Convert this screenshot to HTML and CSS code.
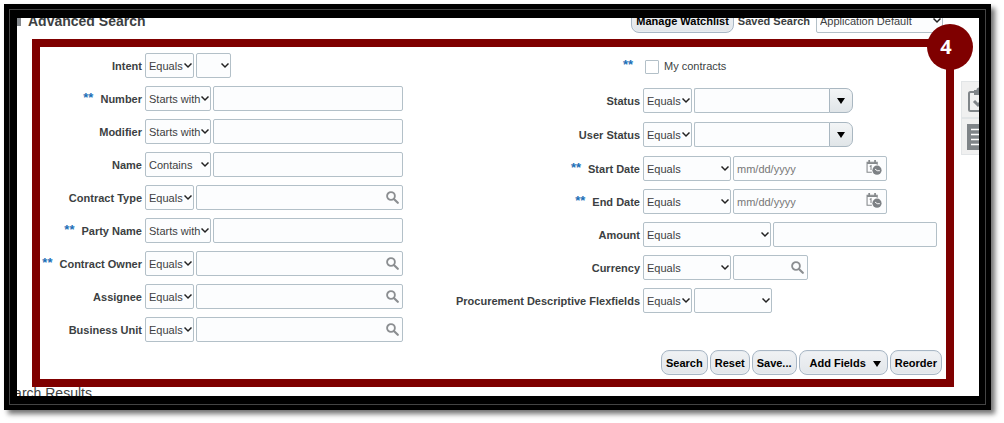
FILE: index.html
```html
<!DOCTYPE html>
<html lang="en">
<head>
    <meta charset="UTF-8">
    <meta name="viewport" content="width=device-width, initial-scale=1.0">
    <title>Advanced Search</title>
    <link rel="stylesheet" href="styles.css">
</head>
<body>
    <svg class="sprite" aria-hidden="true">
        <symbol id="icon-search" viewBox="0 0 12 12">
            <circle cx="4.6" cy="4.6" r="3.6" fill="none" stroke="#8b8e91" stroke-width="1.7"/>
            <path d="M7.3 7.3l3.6 3.6" stroke="#8b8e91" stroke-width="2" stroke-linecap="round"/>
        </symbol>
        <symbol id="icon-date" viewBox="0 0 15 14">
            <path d="M5.5 11.5h-4.500v-9.500h9.500v2.500" fill="none" stroke="#85898c"/>
            <path d="M1 3h9.500M3 0v3M8.500 0v3" stroke="#85898c" stroke-width="1.600"/>
            <path d="M3.500 6l1.200-.7v4" fill="none" stroke="#85898c"/>
            <circle cx="10.300" cy="9.500" r="4.300" fill="#7d8185"/>
            <path d="M8.500 8.500l2 1.500h2.500" fill="none" stroke="#fff" stroke-width=".9"/>
        </symbol>
    </svg>

    <div class="frame">
        <main class="page">
            <!-- Page header -->
            <header class="header">
                <span class="disclosure"></span>
                <h1>Advanced Search</h1>
                <button type="button" class="btn">Manage Watchlist</button>
                <label for="saved-search" class="saved-label">Saved Search</label>
                <select id="saved-search" class="saved-select"><option>Application Default</option></select>
            </header>

            <div class="workspace">
                <!-- Search panel -->
                <form class="panel">
                    <div class="columns">
                        <div class="column">
                            <div class="row">
                                <label for="intent">Intent</label>
                                <div class="controls">
                                    <select class="op" aria-label="Intent operator"><option>Equals</option></select>
                                    <select id="intent" class="tiny"><option></option></select>
                                </div>
                            </div>
                            <div class="row">
                                <label for="number"><span class="req">**</span>Number</label>
                                <div class="controls">
                                    <select class="op-medium" aria-label="Number operator"><option>Starts with</option></select>
                                    <input type="text" id="number">
                                </div>
                            </div>
                            <div class="row">
                                <label for="modifier">Modifier</label>
                                <div class="controls">
                                    <select class="op-medium" aria-label="Modifier operator"><option>Starts with</option></select>
                                    <input type="text" id="modifier">
                                </div>
                            </div>
                            <div class="row">
                                <label for="name">Name</label>
                                <div class="controls">
                                    <select class="op-medium" aria-label="Name operator"><option>Contains</option></select>
                                    <input type="text" id="name">
                                </div>
                            </div>
                            <div class="row">
                                <label for="contract-type">Contract Type</label>
                                <div class="controls">
                                    <select class="op" aria-label="Contract Type operator"><option>Equals</option></select>
                                    <div class="field">
                                        <input type="text" id="contract-type">
                                        <svg class="icon-search"><use href="#icon-search"/></svg>
                                    </div>
                                </div>
                            </div>
                            <div class="row">
                                <label for="party-name"><span class="req">**</span>Party Name</label>
                                <div class="controls">
                                    <select class="op-medium" aria-label="Party Name operator"><option>Starts with</option></select>
                                    <input type="text" id="party-name">
                                </div>
                            </div>
                            <div class="row">
                                <label for="contract-owner"><span class="req">**</span>Contract Owner</label>
                                <div class="controls">
                                    <select class="op" aria-label="Contract Owner operator"><option>Equals</option></select>
                                    <div class="field">
                                        <input type="text" id="contract-owner">
                                        <svg class="icon-search"><use href="#icon-search"/></svg>
                                    </div>
                                </div>
                            </div>
                            <div class="row">
                                <label for="assignee">Assignee</label>
                                <div class="controls">
                                    <select class="op" aria-label="Assignee operator"><option>Equals</option></select>
                                    <div class="field">
                                        <input type="text" id="assignee">
                                        <svg class="icon-search"><use href="#icon-search"/></svg>
                                    </div>
                                </div>
                            </div>
                            <div class="row">
                                <label for="business-unit">Business Unit</label>
                                <div class="controls">
                                    <select class="op" aria-label="Business Unit operator"><option>Equals</option></select>
                                    <div class="field">
                                        <input type="text" id="business-unit">
                                        <svg class="icon-search"><use href="#icon-search"/></svg>
                                    </div>
                                </div>
                            </div>
                        </div>

                        <div class="column column-right">
                            <div class="row row-check">
                                <span class="row-label"><span class="req">**</span></span>
                                <div class="controls">
                                    <input type="checkbox" id="my-contracts">
                                    <label for="my-contracts">My contracts</label>
                                </div>
                            </div>
                            <div class="row row-combo">
                                <label for="status">Status</label>
                                <div class="controls">
                                    <select class="op" aria-label="Status operator"><option>Equals</option></select>
                                    <div class="combo">
                                        <input type="text" id="status">
                                        <button type="button" aria-label="Show statuses"><span class="arrow"></span></button>
                                    </div>
                                </div>
                            </div>
                            <div class="row row-combo">
                                <label for="user-status">User Status</label>
                                <div class="controls">
                                    <select class="op" aria-label="User Status operator"><option>Equals</option></select>
                                    <div class="combo">
                                        <input type="text" id="user-status">
                                        <button type="button" aria-label="Show user statuses"><span class="arrow"></span></button>
                                    </div>
                                </div>
                            </div>
                            <div class="row">
                                <label for="start-date"><span class="req">**</span>Start Date</label>
                                <div class="controls">
                                    <select class="op-wide" aria-label="Start Date operator"><option>Equals</option></select>
                                    <div class="field date">
                                        <input type="text" id="start-date" placeholder="mm/dd/yyyy">
                                        <svg class="icon-date"><use href="#icon-date"/></svg>
                                    </div>
                                </div>
                            </div>
                            <div class="row">
                                <label for="end-date"><span class="req">**</span>End Date</label>
                                <div class="controls">
                                    <select class="op-wide" aria-label="End Date operator"><option>Equals</option></select>
                                    <div class="field date">
                                        <input type="text" id="end-date" placeholder="mm/dd/yyyy">
                                        <svg class="icon-date"><use href="#icon-date"/></svg>
                                    </div>
                                </div>
                            </div>
                            <div class="row">
                                <label for="amount">Amount</label>
                                <div class="controls">
                                    <select class="op-amount" aria-label="Amount operator"><option>Equals</option></select>
                                    <input type="text" id="amount" class="amount">
                                </div>
                            </div>
                            <div class="row">
                                <label for="currency">Currency</label>
                                <div class="controls">
                                    <select class="op-wide" aria-label="Currency operator"><option>Equals</option></select>
                                    <div class="field currency">
                                        <input type="text" id="currency">
                                        <svg class="icon-search"><use href="#icon-search"/></svg>
                                    </div>
                                </div>
                            </div>
                            <div class="row">
                                <label for="flexfields">Procurement Descriptive Flexfields</label>
                                <div class="controls">
                                    <select class="op" aria-label="Flexfields operator"><option>Equals</option></select>
                                    <select id="flexfields" class="flexfields"><option></option></select>
                                </div>
                            </div>
                        </div>
                    </div>

                    <div class="actions">
                        <button type="button" class="btn">Search</button>
                        <button type="button" class="btn">Reset</button>
                        <button type="button" class="btn">Save...</button>
                        <button type="button" class="btn add-fields">Add Fields <span class="arrow"></span></button>
                        <button type="button" class="btn">Reorder</button>
                    </div>

                    <span class="badge">4</span>
                </form>

                <!-- Side tabs -->
                <aside class="tabs">
                    <button type="button" class="tab" aria-label="Tasks">
                        <svg width="24" height="26" viewBox="0 0 24 26">
                            <path d="M7 5H3.500Q2 5 2 6.500V22.500Q2 24 3.500 24H20.500Q22 24 22 22.500V6.500Q22 5 20.500 5H17" fill="none" stroke="#808589" stroke-width="2"/>
                            <path d="M7 3h2.500a2.500 2.500 0 0 1 5 0H17v5H7z" fill="#808589"/>
                            <path d="M7 14l4 4 7-7" fill="none" stroke="#808589" stroke-width="3"/>
                        </svg>
                    </button>
                    <button type="button" class="tab" aria-label="List">
                        <svg width="24" height="26" viewBox="0 0 24 26">
                            <path d="M0 0h24v26H0z" fill="#7f8488"/>
                            <path d="M4 5.500h16M4 10.500h16M4 15.500h16M4 20.500h16" stroke="#fff" stroke-width="1.500"/>
                        </svg>
                    </button>
                </aside>
            </div>

            <h2 class="results">Search Results</h2>
        </main>
    </div>
</body>
</html>
```
FILE: styles.css
```css
* {
    box-sizing: border-box;
}

body {
    margin: 0;
    padding: 4px 13px 13px 4px;
    background: #fff;
    color: #3c3f42;
    font-family: "Liberation Sans", Arial, sans-serif;
    font-size: 11px;
}

button,
input,
select {
    font: inherit;
    color: inherit;
}

.sprite {
    display: none;
}

/* Double black frame */
.frame {
    border: 6px solid #000;
    background: #000;
    box-shadow: 4px 4px 5px rgba(0, 0, 0, 0.55);
}

.page {
    border: solid #000;
    border-width: 8px 6px 8px 7px;
    outline: 1px solid #444;
    background-color: #fff;
    overflow: hidden;
}

/* Header, scrolled partly under the frame */
.header {
    display: flex;
    align-items: center;
    height: 25px;
    margin-top: -10px;
    padding-right: 36px;
}

.header h1 {
    flex: 1;
    margin: 0;
    font-size: 14px;
    line-height: 20px;
}

.disclosure {
    width: 4px;
    height: 10px;
    margin-right: 7px;
    background: #85898e;
}

.saved-label {
    margin: 0 6px 0 4px;
    font-weight: bold;
}

.saved-select {
    width: 127px;
}

/* Panel */
.workspace {
    display: flex;
    margin: 6px 0 0 15px;
}

.panel {
    position: relative;
    flex: 1;
    padding: 6px 4px 4px 0;
    border: 8px solid #7f0000;
}

.columns {
    display: grid;
    grid-template-columns: 2fr 3fr;
}

.column {
    display: flex;
    flex-direction: column;
    gap: 8px;
}

.row {
    display: flex;
    align-items: center;
    gap: 3px;
    height: 25px;
}

.row-check {
    margin-bottom: 2px;
}

.row-combo {
    margin-bottom: 1px;
}

.row > label,
.row-label {
    flex: none;
    width: 102px;
    padding-top: 1px;
    font-weight: bold;
    line-height: 13px;
    text-align: right;
    white-space: nowrap;
}

.column-right .row > label,
.column-right .row-label {
    width: 237px;
}

.req {
    margin-right: 7px;
    color: #1c6fb7;
    font-size: 13px;
    line-height: 0;
    vertical-align: 1px;
}

.controls {
    display: flex;
    align-items: center;
    flex: none;
    gap: 2px;
    width: 258px;
}

.column-right .controls {
    width: auto;
}

select,
input[type="text"] {
    height: 25px;
    margin: 0;
    padding: 1px 3px 0;
    border: 1px solid #b3c0c8;
    border-radius: 2px;
    background-color: #fcfdfe;
}

input[type="text"] {
    flex: 1;
    width: 100%;
    min-width: 0;
}

input::placeholder {
    color: #777;
    opacity: 1;
}

select {
    appearance: none;
    background-image: url("data:image/svg+xml,%3Csvg xmlns='http://www.w3.org/2000/svg' width='8' height='7'%3E%3Cpath d='M.500 1.500L4 5l3.500-3.500' fill='none' stroke='%23222' stroke-width='1.500'/%3E%3C/svg%3E");
    background-repeat: no-repeat;
    background-position: right 1px center;
}

.op {
    width: 49px;
}

.op-medium {
    width: 66px;
}

.op-wide {
    width: 88px;
}

.op-amount {
    width: 128px;
}

.tiny {
    width: 35px;
}

.flexfields {
    width: 78px;
}

.controls .amount {
    flex: none;
    width: 164px;
}

/* Text box with an icon over its right end */
.field {
    position: relative;
    display: flex;
    flex: 1;
}

.field.date {
    flex: none;
    width: 154px;
}

.field.currency {
    flex: none;
    width: 75px;
}

.icon-search {
    position: absolute;
    top: 6px;
    right: 4px;
    width: 13px;
    height: 13px;
}

.icon-date {
    position: absolute;
    top: 4px;
    right: 5px;
    width: 16px;
    height: 15px;
}

.combo {
    display: flex;
    width: 159px;
}

.combo input[type="text"] {
    border-right: 0;
    border-radius: 2px 0 0 2px;
}

.combo button {
    display: flex;
    align-items: center;
    justify-content: center;
    width: 24px;
    padding: 0;
    border: 1px solid #a9b7c1;
    border-radius: 0 7px 7px 0;
    background: linear-gradient(#f3f5f6, #e0e5e8);
}

.arrow {
    display: inline-block;
    border: 4px solid transparent;
    border-top: 6px solid #000;
    border-bottom: 0;
}

input[type="checkbox"] {
    appearance: none;
    width: 14px;
    height: 14px;
    margin: 2px 3px 0 2px;
    border: 1px solid #b3c0c8;
    border-radius: 1px;
    background: #fff;
}

/* Buttons */
.btn {
    height: 25px;
    padding: 0 4px;
    border: 1px solid #a9b7c5;
    border-radius: 8px;
    background: linear-gradient(#f0f2f4, #e2e6ea);
    box-shadow: inset 0 0 0 1px #e8ecf0;
    color: #000;
    font-weight: bold;
    white-space: nowrap;
}

.actions {
    display: flex;
    justify-content: flex-end;
    gap: 2px;
    margin-top: 8px;
}

.add-fields {
    padding: 0 6px 0 10px;
}

.add-fields .arrow {
    margin-left: 4px;
}

.badge {
    position: absolute;
    top: -23px;
    right: -27px;
    width: 46px;
    height: 46px;
    padding-right: 8px;
    border-radius: 50%;
    background: #7f0000;
    color: #fff;
    font: bold 20px/46px "Open Sans", sans-serif;
    text-align: center;
}

/* Side tabs cut off by the frame */
.tabs {
    width: 18px;
    margin: 42px 0 0 7px;
}

.tab {
    display: flex;
    align-items: center;
    width: 40px;
    height: 37px;
    padding: 0 5px;
    border: 1px solid #e2e5e7;
    background: #f0f0f0;
}

.tab svg {
    flex: none;
}

.results {
    height: 9px;
    margin: 0 0 0 -20px;
    font-size: 14px;
    font-weight: normal;
    line-height: 13px;
}
```
